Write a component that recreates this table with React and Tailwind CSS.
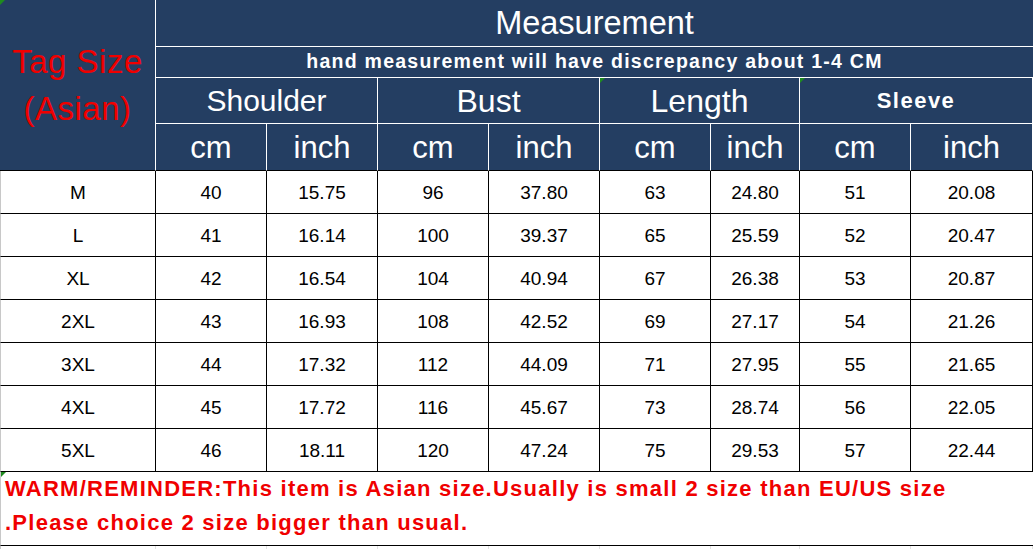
import React from 'react'

const NAVY = 'bg-[#243e62]'

const rows = [
  ['M', '40', '15.75', '96', '37.80', '63', '24.80', '51', '20.08'],
  ['L', '41', '16.14', '100', '39.37', '65', '25.59', '52', '20.47'],
  ['XL', '42', '16.54', '104', '40.94', '67', '26.38', '53', '20.87'],
  ['2XL', '43', '16.93', '108', '42.52', '69', '27.17', '54', '21.26'],
  ['3XL', '44', '17.32', '112', '44.09', '71', '27.95', '55', '21.65'],
  ['4XL', '45', '17.72', '116', '45.67', '73', '28.74', '56', '22.05'],
  ['5XL', '46', '18.11', '120', '47.24', '75', '29.53', '57', '22.44'],
]

// widths include the 1px right border of each cell
const widths = ['w-[156px]', 'w-[111px]', 'w-[111px]', 'w-[111px]', 'w-[111px]', 'w-[111px]', 'w-[89px]', 'w-[111px]', 'w-[122px]']

const Flag = ({ className }) => (
  <span className={`absolute w-0 h-0 border-t-[5px] border-r-[5px] border-t-[#1f8a1f] border-r-transparent ${className}`} />
)

export default function App() {
  return (
    <div className="w-[1034px] h-[549px] bg-white overflow-hidden relative font-['Liberation_Sans',Arial,sans-serif]">
      {/* header */}
      <div className="flex">
        <div className={`w-[156px] h-[171px] ${NAVY} border-r border-r-white border-b border-b-black flex items-center justify-center`}>
          <div className="text-[#f00000] text-[33px] leading-[47px] text-center tracking-[0.5px]">
            Tag Size
            <br />
            (Asian)
          </div>
        </div>
        <div className="w-[877px] flex flex-col">
          <div className={`h-[47px] ${NAVY} border-b border-white flex items-center justify-center text-white text-[32.5px] leading-none`}>
            Measurement
          </div>
          <div className={`h-[31px] ${NAVY} border-b border-white flex items-center justify-center text-white text-[19.5px] font-bold tracking-[1.25px] leading-none`}>
            hand measurement will have discrepancy about 1-4 CM
          </div>
          <div className="flex h-[46px]">
            <div className={`w-[222px] ${NAVY} border-r border-b border-white flex items-center justify-center text-white text-[30px] leading-none`}>Shoulder</div>
            <div className={`w-[222px] ${NAVY} border-r border-b border-white flex items-center justify-center text-white text-[32px] leading-none`}>Bust</div>
            <div className={`w-[200px] ${NAVY} border-r border-b border-white flex items-center justify-center text-white text-[32px] leading-none`}>Length</div>
            <div className={`w-[233px] ${NAVY} border-r border-b border-white flex items-center justify-center text-white text-[22px] font-bold tracking-[1.5px] leading-none`}>Sleeve</div>
          </div>
          <div className="flex h-[47px]">
            {['cm', 'inch', 'cm', 'inch', 'cm', 'inch', 'cm', 'inch'].map((t, i) => (
              <div
                key={i}
                className={`${widths[i + 1]} ${NAVY} border-r border-r-white border-b border-b-black flex items-center justify-center text-white text-[31px] leading-none`}
              >
                {t}
              </div>
            ))}
          </div>
        </div>
      </div>

      {/* data */}
      {rows.map((r, ri) => (
        <div key={ri} className="flex h-[43px]">
          {r.map((v, i) => (
            <div
              key={i}
              className={`${widths[i]} border-r border-b border-black flex items-center justify-center text-black text-[19px] leading-none ${i === 0 ? 'border-l border-l-[#c8c8c8]' : ''}`}
            >
              {v}
            </div>
          ))}
        </div>
      ))}

      {/* reminder */}
      <div className="w-[1033px] h-[74px] border-b border-black border-l border-l-[#c8c8c8] pl-[4px] text-[#f00000] text-[22px] font-bold tracking-[1.25px] leading-[34px]">
        WARM/REMINDER:This item is Asian size.Usually is small 2 size than EU/US size
        <br />
        .Please choice 2 size bigger than usual.
      </div>

      <div className="flex h-[10px]">
        {widths.map((w, i) => (
          <div key={i} className={`${w} border-r border-[#e2e2e2] ${i === 0 ? 'border-l border-l-[#c8c8c8]' : ''}`} />
        ))}
      </div>

      <Flag className="left-0 top-0" />
      <Flag className="left-[600px] top-[78px]" />
      <Flag className="left-[800px] top-[78px]" />
      <Flag className="left-[1px] top-[472px]" />
    </div>
  )
}
